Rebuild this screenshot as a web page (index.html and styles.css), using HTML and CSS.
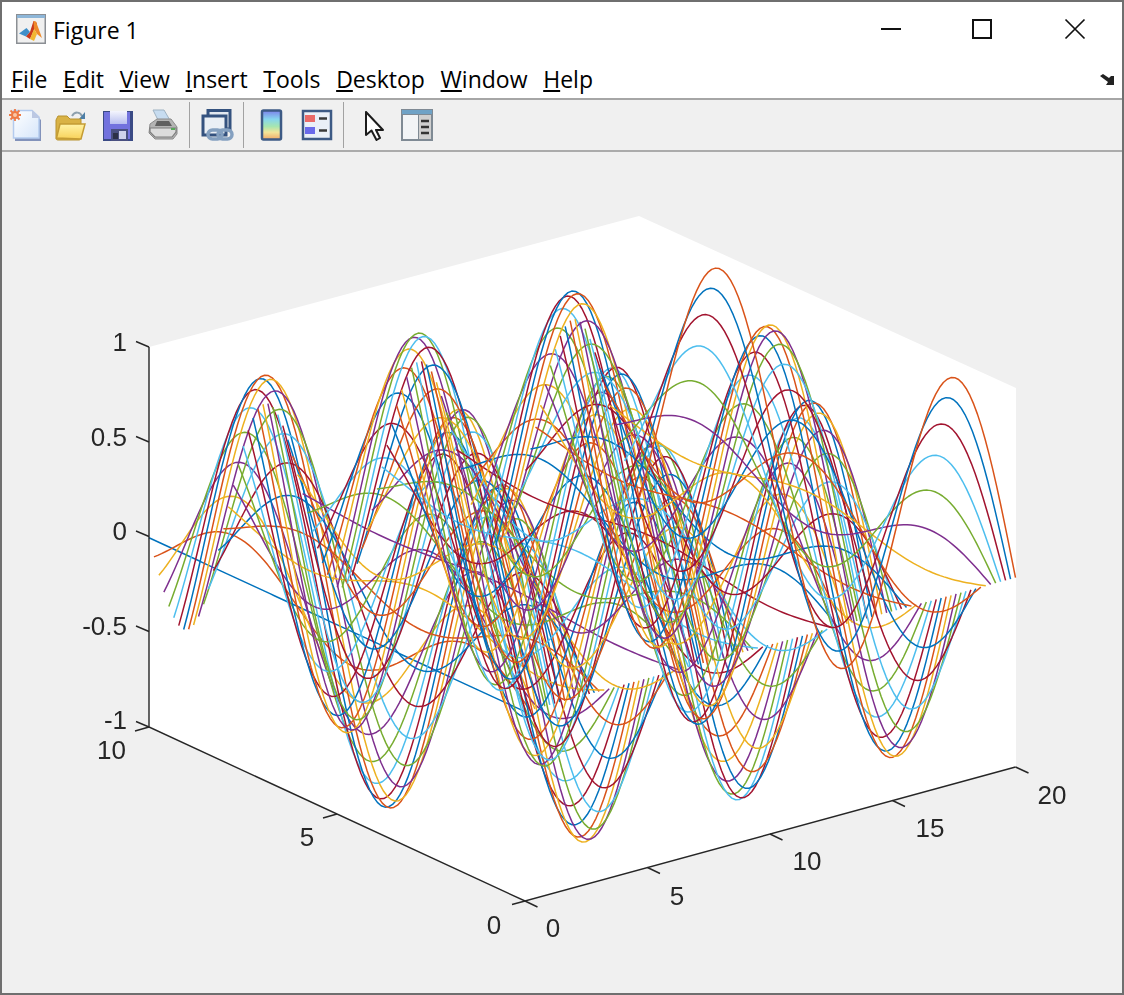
FILE: index.html
```html
<!DOCTYPE html>
<html lang="en">
<head>
<meta charset="utf-8">
<title>Figure 1</title>
<link rel="stylesheet" href="styles.css">
</head>
<body>
<div class="window">
  <header class="titlebar">
    <svg class="app-icon" viewBox="0 0 30 30">
      <rect class="ai-frame" x=".75" y=".75" width="28.5" height="28.5"/>
      <rect class="ai-bar" x="1" y="1" width="28" height="3"/>
      <path class="ai-blue" d="M3 19.5 10.5 14 14 18 10 22.5Z"/>
      <path class="ai-red" d="M10 22.5 14 18 17.5 7 21 9 14 25Z"/>
      <path class="ai-orange" d="M17.5 7 20 7.5 26 24 21 20 18 15Z"/>
      <path class="ai-yellow" d="M14 25 18 15 21 20 18 27Z"/>
    </svg>
    <span class="title">Figure 1</span>
    <div class="controls">
      <svg class="ctl" viewBox="0 0 20 20"><path d="M0 10H20"/></svg>
      <svg class="ctl" viewBox="0 0 20 20"><path d="M1 1H19V19H1Z"/></svg>
      <svg class="ctl ctl-thin" viewBox="0 0 20 20"><path d="M.5.5 19.5 19.5M19.5.5.5 19.5"/></svg>
    </div>
  </header>
  <nav class="menubar">
    <span class="menu"><u>F</u>ile</span>
    <span class="menu"><u>E</u>dit</span>
    <span class="menu"><u>V</u>iew</span>
    <span class="menu"><u>I</u>nsert</span>
    <span class="menu"><u>T</u>ools</span>
    <span class="menu"><u>D</u>esktop</span>
    <span class="menu"><u>W</u>indow</span>
    <span class="menu"><u>H</u>elp</span>
    <svg class="dock" viewBox="0 0 16 12"><path d="M1 2 4 0 10 4 12 2 15 2 15 11 7 11 9 8Z"/></svg>
  </nav>
  <div class="toolbar">
    <div class="group">
      <svg class="tool" viewBox="0 0 32 32">
        <defs>
          <linearGradient id="paper" x1="0" y1="0" x2="1" y2="1"><stop offset="0" stop-color="#ffffff"/><stop offset="1" stop-color="#d6e6fa"/></linearGradient>
          <linearGradient id="folder" x1="0" y1="0" x2="0" y2="1"><stop offset="0" stop-color="#fff3a6"/><stop offset="1" stop-color="#f8d25a"/></linearGradient>
          <linearGradient id="rainbow" x1="0" y1="0" x2="0" y2="1"><stop offset="0" stop-color="#7c80ea"/><stop offset=".3" stop-color="#86d6ee"/><stop offset=".55" stop-color="#a6e6b0"/><stop offset=".75" stop-color="#f2e59a"/><stop offset="1" stop-color="#f0a868"/></linearGradient>
          <linearGradient id="label" x1="0" y1="0" x2="0" y2="1"><stop offset="0" stop-color="#f4f5fd"/><stop offset="1" stop-color="#b9bff0"/></linearGradient>
        </defs>
        <path class="i-shadow" d="M6 3H24L32 11V32H6Z"/>
        <path class="i-paper" d="M4.500 1.500H23L30 8V29H4.500Z"/>
        <path class="i-fold" d="M23 1 31 9H23Z"/>
        <path class="i-burst-rays" d="M6 0V12M0 6H12M1.500 1.500 10.500 10.500M10.500 1.500 1.500 10.500"/>
        <circle class="i-burst" cx="6" cy="6" r="4"/>
        <circle class="i-burst-core" cx="6" cy="6" r="2"/>
      </svg>
      <svg class="tool" viewBox="0 0 32 32">
        <path class="i-arc" d="M17 7C20 2 25 3 27 7"/>
        <path class="i-arc-head" d="M30 3V10H24Z"/>
        <path class="i-folder-back" d="M1 11 3 7H12L15 10H26V28C26 30 25 31 24 31H3C1 31 1 30 1 28Z"/>
        <path class="i-folder-front" d="M1.5 29 5 15H30L26 30Z"/>
      </svg>
      <svg class="tool" viewBox="0 0 32 32">
        <path class="i-disk" d="M2 2H32V32H2Z"/>
        <path class="i-disk-in" d="M3 3H29V30H3Z"/>
        <path class="i-disk-label" d="M9 2H26V15H9Z"/>
        <path class="i-disk-shutter" d="M10 20H27V32H10Z"/>
        <path class="i-disk-slot" d="M18 22H25V30H18Z"/>
        <path class="i-disk-hole" d="M12 24H17V30H12Z"/>
      </svg>
      <svg class="tool" viewBox="0 0 32 32">
        <path class="i-sheet" d="M6 1H17L24 13H12Z"/>
        <path class="i-pr-body" d="M3 15 10 10H24L30 18V25L26 30H8L2 24Z"/>
        <path class="i-pr-tray" d="M3 19H29V23L25 28H8L3 23Z"/>
        <path class="i-pr-slot" d="M10 12H22L25 17H8Z"/>
        <path class="i-pr-led" d="M24 19H28V21H24Z"/>
      </svg>
    </div>
    <div class="sep"></div>
    <div class="group">
      <svg class="tool" viewBox="0 0 32 32">
        <path class="i-win" d="M7 1.500H29V20H7Z"/>
        <path class="i-win-b" d="M2 7H25V26H2Z"/>
        <rect class="i-link" x="7" y="21" width="14" height="9" rx="4.500"/>
        <rect class="i-link" x="17" y="21" width="14" height="9" rx="4.500"/>
      </svg>
    </div>
    <div class="sep"></div>
    <div class="group">
      <svg class="tool" viewBox="0 0 32 32">
        <rect class="i-cbar" x="7" y="1.500" width="19" height="29" rx="1.500"/>
      </svg>
      <svg class="tool" viewBox="0 0 32 32">
        <path class="i-legend" d="M2 2H30V30H2Z"/>
        <path class="i-leg-red" d="M4 6H14V13H4Z"/>
        <path class="i-leg-blue" d="M4 18H14V25H4Z"/>
        <path class="i-leg-line" d="M18 9.500H26M18 21.500H26"/>
      </svg>
    </div>
    <div class="sep"></div>
    <div class="group">
      <svg class="tool" viewBox="0 0 32 32">
        <path class="i-pointer" d="M11 3V26L16.500 21.500 21.500 31 25 29 21 21H28Z"/>
      </svg>
      <svg class="tool" viewBox="0 0 32 32">
        <path class="i-panel" d="M0 0H32V32H0Z"/>
        <path class="i-panel-top" d="M1 1H31V5H1Z"/>
        <path class="i-panel-left" d="M2 6H17V30H2Z"/>
        <path class="i-panel-right" d="M18 6H30V30H18Z"/>
        <path class="i-panel-lines" d="M20 12H28M20 18H28M20 24H28"/>
      </svg>
    </div>
  </div>
  <main class="figure">
    <svg class="plot" viewBox="2 152 1120 841" id="plot">
      <path class="wall" d="M149 347 639 216 1016 388V767L525 901 149 727Z"/>
      <g id="curves"></g>
      <path class="axis" d="M149 347V727L525 901 1015.500 767"/>
      <path class="axis" d="M149 347 136 341.500M149 442 136 436.500M149 536.500 136 531M149 631.500 136 626M149 727 136 721.500"/>
      <path class="axis" d="M149 727 135 731M337 814 323 818M525 901 512 904.500"/>
      <path class="axis" d="M525 901 537.500 907M647.500 867.500 660 873.500M770 834 782.500 840M892.500 800.500 905 806.500M1015.500 767 1028.500 773"/>
      <g class="labels end">
        <text x="127" y="351">1</text>
        <text x="127" y="446">0.5</text>
        <text x="127" y="540">0</text>
        <text x="127" y="635">-0.5</text>
        <text x="127" y="729">-1</text>
        <text x="126" y="759">10</text>
      </g>
      <g class="labels mid">
        <text x="307" y="846">5</text>
        <text x="494" y="934">0</text>
        <text x="553" y="937">0</text>
        <text x="677" y="905">5</text>
        <text x="807" y="870">10</text>
        <text x="930" y="837">15</text>
        <text x="1052" y="804">20</text>
      </g>
    </svg>
  </main>
</div>
<script src="plot.js"></script>
</body>
</html>
```
FILE: styles.css
```css
* { box-sizing: border-box; }
html, body { margin: 0; padding: 0; }
body { width: 1124px; height: 995px; overflow: hidden; background: #f0f0f0; }

.window {
  width: 1124px;
  height: 995px;
  border: 2px solid #6f6f6f;
  display: flex;
  flex-direction: column;
  background: #f0f0f0;
  font-family: "Open Sans", "Noto Sans", sans-serif;
  color: #000;
}

/* title bar */
.titlebar {
  height: 58px;
  flex: none;
  background: #fff;
  display: flex;
  align-items: flex-start;
  padding-left: 14px;
}
.app-icon { width: 30px; height: 30px; margin-top: 12px; flex: none; filter: blur(.35px); }
.ai-frame { fill: #f0f0f0; stroke: #8b8f94; stroke-width: 1.5; }
.ai-bar { fill: #8db6d8; }
.ai-blue { fill: #3f8fc9; }
.ai-red { fill: #c8381c; }
.ai-orange { fill: #ee8a2a; }
.ai-yellow { fill: #f2b632; }
.title { font-size: 23px; line-height: 30px; margin: 13px 0 0 7px; }
.controls { margin-left: auto; display: flex; align-items: flex-start; padding: 17px 37px 0 0; gap: 71px; }
.ctl { width: 20px; height: 20px; display: block; overflow: visible; }
.ctl path { fill: none; stroke: #111; stroke-width: 2; }
.ctl-thin { margin-left: 2px; }
.ctl-thin path { stroke-width: 1.7; }

/* menu bar */
.menubar {
  height: 40px;
  flex: none;
  background: #fff;
  border-bottom: 2px solid #a6a6a6;
  display: flex;
  align-items: flex-start;
  gap: 15.7px;
  padding-left: 9px;
}
.menu { font-size: 23px; line-height: 30px; margin-top: 4px; }
.menu u { text-underline-offset: 2px; text-decoration-thickness: 1.5px; }
.dock { width: 16px; height: 12px; margin: 14px 7px 0 auto; filter: blur(.3px); }
.dock path { fill: #222; }

/* tool bar */
.toolbar {
  height: 52px;
  flex: none;
  background: #f0f0f0;
  border-bottom: 2px solid #ababab;
  display: flex;
  align-items: center;
  padding-left: 7px;
}
.group { display: flex; gap: 14px; }
.tool { width: 32px; height: 32px; display: block; overflow: visible; filter: blur(.6px); }
.sep { width: 1px; height: 46px; background: #a2a2a2; margin: 0 11px 0 10px; }

.i-shadow { fill: #8292ba; }
.i-paper { fill: url(#paper); stroke: #b4cbee; stroke-width: 1.5; }
.i-fold { fill: #bcc8e2; }
.i-burst { fill: #ee7a45; }
.i-burst-rays { fill: none; stroke: #ee7a45; stroke-width: 1.8; }
.i-burst-core { fill: #f9c7a6; }

.i-arc { fill: none; stroke: #8ea0ad; stroke-width: 2; }
.i-arc-head { fill: #4f7fa6; }
.i-folder-back { fill: #d9b245; stroke: #b8922e; stroke-width: 1; }
.i-folder-front { fill: url(#folder); stroke: #c49c34; stroke-width: 1.5; }

.i-disk { fill: #3a4a85; }
.i-disk-in { fill: #7272de; }
.i-disk-label { fill: url(#label); }
.i-disk-shutter { fill: #4a5080; }
.i-disk-slot { fill: #cfd2ea; }
.i-disk-hole { fill: #2c3046; }

.i-sheet { fill: #c7dcf0; stroke: #9eb2c2; stroke-width: 1; }
.i-pr-body { fill: #b4b4b4; stroke: #8a8a8a; stroke-width: 1; }
.i-pr-tray { fill: #dcdcdc; stroke: #7c7c7c; stroke-width: 1.2; }
.i-pr-slot { fill: #606060; }
.i-pr-led { fill: #57a75a; }

.i-win { fill: #e2e8f0; stroke: #34527f; stroke-width: 3; }
.i-win-b { fill: #eaeff5; stroke: #34527f; stroke-width: 3; }
.i-link { fill: none; stroke: #84a0c0; stroke-width: 3.500; }

.i-cbar { fill: url(#rainbow); stroke: #3d5a85; stroke-width: 2.500; }

.i-legend { fill: #eaf0f8; stroke: #3d5a85; stroke-width: 2.500; }
.i-leg-red { fill: #ea6a68; }
.i-leg-blue { fill: #6a6aea; }
.i-leg-line { fill: none; stroke: #3a3a3a; stroke-width: 2.500; }

.i-pointer { fill: #fff; stroke: #1c1c1c; stroke-width: 2; stroke-linejoin: round; }

.i-panel { fill: #7f8a94; }
.i-panel-top { fill: #6fa2c6; }
.i-panel-left { fill: #f2f4f6; }
.i-panel-right { fill: #cfcfcf; }
.i-panel-lines { fill: none; stroke: #333; stroke-width: 2.500; }

/* plot */
.figure { flex: 1; min-height: 0; background: #f0f0f0; }
.plot { display: block; width: 1120px; height: 841px; filter: blur(.3px); }
.wall { fill: #fff; }
.axis { fill: none; stroke: #262626; stroke-width: 1.400; }
.labels text { font-family: "Liberation Sans", Arial, sans-serif; font-size: 26px; fill: #262626; }
.labels.end text { text-anchor: end; }
.labels.mid text { text-anchor: middle; }

.curve { fill: none; stroke-width: 1.500; stroke-linejoin: round; }
.c0 { stroke: #0072bd; }
.c1 { stroke: #d95319; }
.c2 { stroke: #edb120; }
.c3 { stroke: #7e2f8e; }
.c4 { stroke: #77ac30; }
.c5 { stroke: #4dbeee; }
.c6 { stroke: #a2142f; }
```
FILE: plot.js
```js
// Draws plot3(X, Y, sin(X).*sin(Y)) through the view projection of the axes.
(function () {
  var NS = "http://www.w3.org/2000/svg";
  var group = document.getElementById("curves");
  var N = 100;

  function sx(x, y) { return 525 + 24.525 * x - 37.6 * y; }
  function sy(x, y, z) { return 901.5 - 6.7 * x - 17.4 * y - 189.8 - 188.5 * z; }

  for (var i = 0; i < N; i++) {
    var x = 20 * i / (N - 1);
    var d = "";
    for (var j = 0; j < N; j++) {
      var y = 10 * j / (N - 1);
      var z = Math.sin(x) * Math.sin(y);
      d += (j ? "L" : "M") + sx(x, y).toFixed(2) + " " + sy(x, y, z).toFixed(2);
    }
    var path = document.createElementNS(NS, "path");
    path.setAttribute("d", d);
    path.setAttribute("class", "curve c" + (i % 7));
    group.appendChild(path);
  }
})();
```
